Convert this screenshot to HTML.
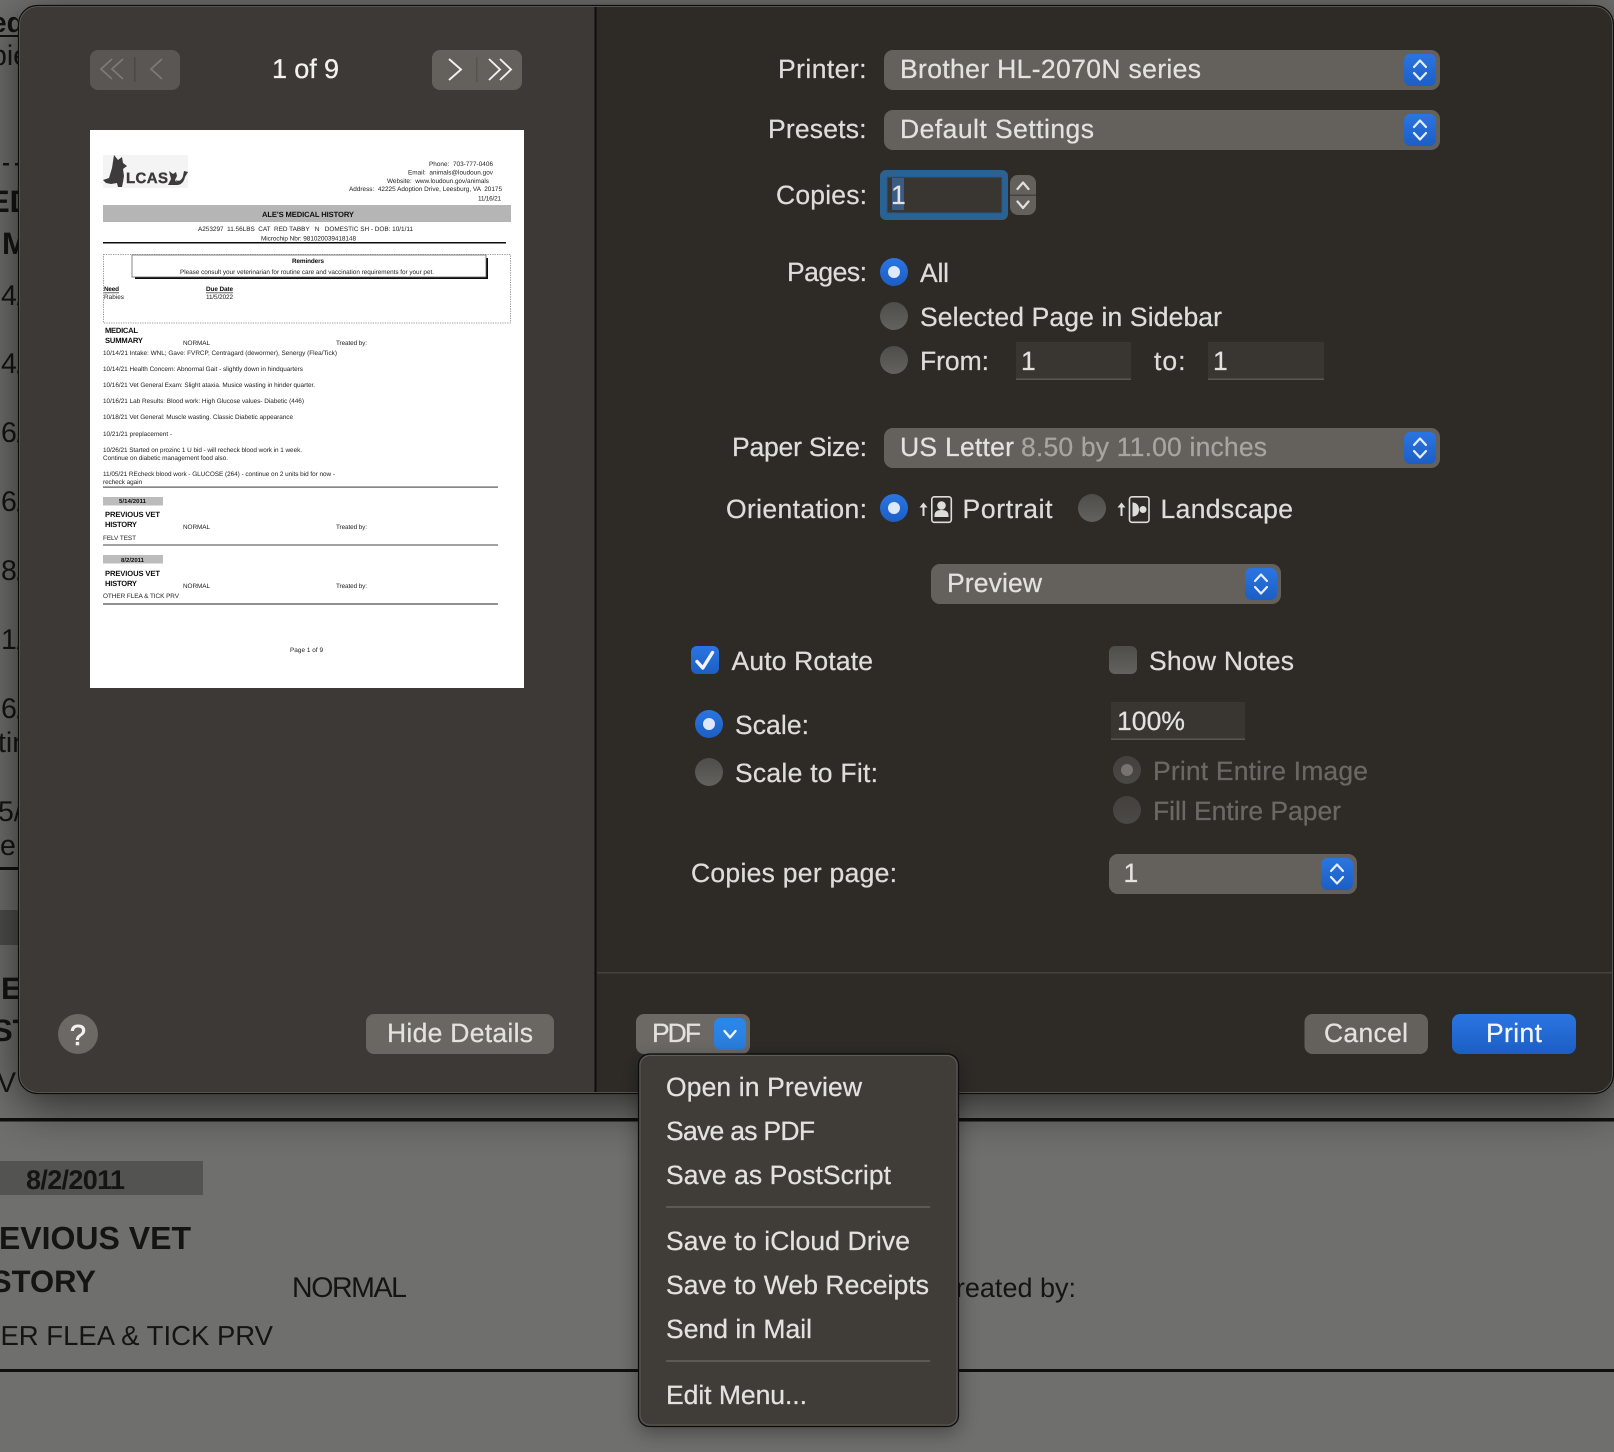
<!DOCTYPE html>
<html lang="en">
<head>
<meta charset="utf-8">
<title>Print dialog</title>
<style>
html,body{margin:0;padding:0;background:#6e6e6c;width:1614px;height:1452px;overflow:hidden}
svg{display:block}
text{font-family:"Liberation Sans",sans-serif;text-rendering:geometricPrecision}
.t{font-size:26.5px;fill:#dfddda;stroke:#dfddda;stroke-width:.25px}
.m{font-size:26.5px;fill:#e4e2df;stroke:#e4e2df;stroke-width:.25px}
.d{font-size:26.5px;fill:#6b6864;stroke:#6b6864;stroke-width:.25px}
.g{font-size:26.5px;fill:#a8a5a1;stroke:#a8a5a1;stroke-width:.25px}
.b{fill:#141414;font-size:28.500px}
.bb{fill:#141414;font-size:31px;font-weight:bold}
.p{font-size:6.4px;fill:#222;white-space:pre}
.pb{font-size:6.8px;fill:#111;font-weight:bold}
.ph{font-size:7.6px;fill:#111;font-weight:bold}
</style>
</head>
<body>
<svg xmlns="http://www.w3.org/2000/svg" width="1614" height="1452" viewBox="0 0 1614 1452">
<defs>
<filter id="sh" x="-10%" y="-10%" width="120%" height="125%"><feDropShadow dx="0" dy="12" stdDeviation="24" flood-color="#000" flood-opacity=".62"/></filter>
<filter id="msh" x="-20%" y="-20%" width="140%" height="140%"><feDropShadow dx="0" dy="6" stdDeviation="10" flood-color="#000" flood-opacity=".35"/></filter>
<filter id="soft" x="-2%" y="-2%" width="104%" height="104%"><feGaussianBlur stdDeviation=".38"/></filter>
<linearGradient id="blue" x1="0" y1="0" x2="0" y2="1"><stop offset="0" stop-color="#2b75e2"/><stop offset="1" stop-color="#1c5ec4"/></linearGradient>
<linearGradient id="blue2" x1="0" y1="0" x2="0" y2="1"><stop offset="0" stop-color="#2a88ec"/><stop offset="1" stop-color="#2b7cda"/></linearGradient>
<linearGradient id="off" x1="0" y1="0" x2="0" y2="1"><stop offset="0" stop-color="#4f4d4a"/><stop offset="1" stop-color="#64625e"/></linearGradient>
<linearGradient id="dis" x1="0" y1="0" x2="0" y2="1"><stop offset="0" stop-color="#43403d"/><stop offset="1" stop-color="#4b4946"/></linearGradient>
<clipPath id="dlg"><rect x="18.5" y="5.5" width="1595" height="1088" rx="19"/></clipPath>
<clipPath id="strip"><rect x="0" y="0" width="18" height="1100"/></clipPath>
<g id="ud">
<rect width="32" height="32" rx="6.5" fill="url(#blue)"/>
<path d="M10 13L16 6.500L22 13M10 19L16 25.500L22 19" fill="none" stroke="#e6eefb" stroke-width="2.200" stroke-linecap="round" stroke-linejoin="round"/>
</g>
</defs>

<rect width="1614" height="1452" fill="#6f6f6d"/>

<!-- background document (left strip) -->
<g clip-path="url(#strip)">
<text x="-9" y="32" font-size="28" font-weight="bold" fill="#111">ed</text>
<rect x="0" y="35" width="18" height="2" fill="#111"/>
<text x="-9" y="65" class="b">pie</text>
<rect x="3" y="163" width="6" height="2.500" fill="#141414"/>
<rect x="15" y="163" width="3" height="2.500" fill="#141414"/>
<text x="-11" y="212" class="bb">ED</text>
<text x="2" y="254" class="bb">M</text>
<text x="1" y="305" class="b">4/</text>
<text x="1" y="373" class="b">4/</text>
<text x="1" y="442" class="b">6/</text>
<text x="1" y="511" class="b">6/</text>
<text x="1" y="580" class="b">8/</text>
<text x="1" y="649" class="b">1/</text>
<text x="1" y="718" class="b">6/</text>
<text x="-2" y="752" class="b">tin</text>
<text x="-2" y="821" class="b">5/</text>
<text x="0" y="855" class="b">e</text>
<rect x="0" y="867" width="18" height="3" fill="#111"/>
<rect x="0" y="910" width="18" height="35" fill="#4e4e4c"/>
<text x="1" y="999" class="bb">E</text>
<text x="-8" y="1041" class="bb">ST</text>
<text x="-3" y="1092" class="b">V</text>
</g>

<!-- background document (below dialog) -->
<rect x="0" y="1118" width="1614" height="3.500" fill="#0f0f0f"/>
<rect x="0" y="1369" width="1614" height="3" fill="#0f0f0f"/>
<rect x="0" y="1161" width="203" height="34" fill="#535351"/>
<text x="26" y="1189" font-size="27" font-weight="bold" fill="#141414" textLength="99">8/2/2011</text>
<text x="191" y="1249" class="bb" style="font-size:32px" text-anchor="end">PREVIOUS VET</text>
<text x="96" y="1292" class="bb" text-anchor="end">HISTORY</text>
<text x="292" y="1297" class="b" textLength="115">NORMAL</text>
<text x="273" y="1345" class="b" style="font-size:27.5px" text-anchor="end">OTHER FLEA &amp; TICK PRV</text>
<text x="1076" y="1297" class="b" style="font-size:27px" text-anchor="end">Treated by:</text>

<!-- dialog -->
<rect x="18.500" y="5.500" width="1595" height="1088" rx="19" fill="#2e2b27" filter="url(#sh)"/>
<g clip-path="url(#dlg)">
<rect x="18" y="5" width="577" height="1090" fill="#3c3936"/>
<rect x="596" y="5" width="1020" height="1090" fill="#2e2b27"/>
<rect x="594.500" y="5" width="2" height="1090" fill="#0d0d0b"/>
<rect x="597" y="972" width="1020" height="1.500" fill="#45423e"/>
</g>
<rect x="19.500" y="6.500" width="1593" height="1086" rx="18" fill="none" stroke="#5f5c59" stroke-width="1"/>
<rect x="18.500" y="5.500" width="1595" height="1088" rx="19" fill="none" stroke="#0e0e0d" stroke-width="1.200"/>

<!-- nav -->
<rect x="90" y="50" width="90" height="40" rx="8" fill="#595653"/>
<path d="M112 59L101 69L112 79M123 59L112 69L123 79M162 59L151 69L162 79" fill="none" stroke="#7d7a76" stroke-width="1.800"/>
<rect x="134" y="57" width="1.500" height="25" fill="#4a4744"/>
<rect x="432" y="50" width="90" height="40" rx="8" fill="#64615d"/>
<path d="M449 59L461 69.500L449 80M489 59L500 69.500L489 80M500 59L511 69.500L500 80" fill="none" stroke="#f2f1ef" stroke-width="1.900"/>
<rect x="476" y="57" width="1.500" height="25" fill="#55524f"/>
<text x="272" y="78" font-size="27" fill="#f3f2f0" stroke="#f3f2f0" stroke-width=".3" textLength="67">1 of 9</text>

<!-- preview page -->
<rect x="90" y="130" width="434" height="558" fill="#fff"/>
<g filter="url(#soft)">
<rect x="103" y="155" width="85" height="33" fill="#f4f4f4"/>
<path d="M114 155L118 160L122 157L123 163L127 166L123 169L124 176L123 182L122 187L118 187L117 183L111 184L106 183L103 180L109 178L112 168Z" fill="#3c3a3a"/>
<path d="M169 171L173 174L176 172L177 176L175 180L178 185L168 185L171 179ZM176 180C179 182 182 180 183 176L184 171L188 172L185 177C184 182 181 185 177 185Z" fill="#3c3a3a"/>
<text x="126" y="183" font-size="15" font-weight="bold" fill="#3c3a3a" stroke="#3c3a3a" stroke-width=".4" textLength="42">LCAS</text>
<rect x="103" y="205" width="408" height="17" fill="#b5b5b5"/>
<rect x="103" y="242" width="403" height="1.500" fill="#111"/>
<rect x="103.500" y="254.500" width="407" height="68.500" fill="none" stroke="#777" stroke-width=".8" stroke-dasharray="1.200 1.200"/>
<rect x="135" y="258" width="353" height="21" fill="#111"/>
<rect x="132" y="255" width="354" height="22" fill="#fff" stroke="#666" stroke-width=".8"/>
<rect x="103" y="486.500" width="395" height="1.200" fill="#555"/>
<rect x="103" y="497" width="60" height="8.500" fill="#bcbcbc"/>
<rect x="103" y="544.500" width="395" height="1" fill="#444"/>
<rect x="103" y="555" width="60" height="8.500" fill="#bcbcbc"/>
<rect x="103" y="603.500" width="395" height="1" fill="#222"/>
<rect x="104" y="292.500" width="15" height=".7" fill="#222"/>
<rect x="206" y="292.500" width="27" height=".7" fill="#222"/>
<text class="p" x="429" y="166" textLength="64">Phone:  703-777-0406</text>
<text class="p" x="408" y="174.500" textLength="85">Email:  animals@loudoun.gov</text>
<text class="p" x="387" y="183" textLength="102">Website:  www.loudoun.gov/animals</text>
<text class="p" x="349" y="191" textLength="153">Address:  42225 Adoption Drive, Leesburg, VA  20175</text>
<text class="p" x="478" y="200.500" textLength="23">11/16/21</text>
<text class="ph" x="262" y="217" textLength="92">ALE'S MEDICAL HISTORY</text>
<text class="p" x="198" y="231" textLength="215">A253297  11.56LBS  CAT  RED TABBY   N   DOMESTIC SH - DOB: 10/1/11</text>
<text class="p" x="261" y="240.500" textLength="95">Microchip Nbr: 981020039418148</text>
<text class="pb" x="292" y="263" textLength="32" style="font-size:6.4px">Reminders</text>
<text class="p" x="180" y="274" textLength="254">Please consult your veterinarian for routine care and vaccination requirements for your pet.</text>
<text class="pb" x="104" y="291" textLength="15" style="font-size:6.4px">Need</text>
<text class="pb" x="206" y="291" textLength="27" style="font-size:6.4px">Due Date</text>
<text class="p" x="104" y="299" textLength="20">Rabies</text>
<text class="p" x="206" y="299" textLength="27">11/5/2022</text>
<text class="ph" x="105" y="333" textLength="33">MEDICAL</text>
<text class="ph" x="105" y="343" textLength="38">SUMMARY</text>
<text class="p" x="183" y="345" textLength="27">NORMAL</text>
<text class="p" x="336" y="345" textLength="31">Treated by:</text>
<text class="p" x="103" y="355" textLength="234">10/14/21 Intake: WNL; Gave: FVRCP, Centragard (dewormer), Senergy (Flea/Tick)</text>
<text class="p" x="103" y="371" textLength="200">10/14/21 Health Concern: Abnormal Gait - slightly down in hindquarters</text>
<text class="p" x="103" y="387" textLength="212">10/16/21 Vet General Exam: Slight ataxia. Musice wasting in hinder quarter.</text>
<text class="p" x="103" y="403" textLength="201">10/16/21 Lab Results: Blood work: High Glucose values- Diabetic (446)</text>
<text class="p" x="103" y="419" textLength="190">10/18/21 Vet General: Muscle wasting. Classic Diabetic appearance</text>
<text class="p" x="103" y="436" textLength="69">10/21/21 preplacement -</text>
<text class="p" x="103" y="452" textLength="199">10/26/21 Started on prozinc 1 U bid - will recheck blood work in 1 week.</text>
<text class="p" x="103" y="460" textLength="125">Continue on diabetic management food also.</text>
<text class="p" x="103" y="476" textLength="232">11/05/21 REcheck blood work - GLUCOSE (264) - continue on 2 units bid for now -</text>
<text class="p" x="103" y="484" textLength="39">recheck again</text>
<text class="pb" x="119" y="503" textLength="27" style="font-size:6px">5/14/2011</text>
<text class="ph" x="105" y="517" textLength="55">PREVIOUS VET</text>
<text class="ph" x="105" y="527" textLength="32">HISTORY</text>
<text class="p" x="183" y="529" textLength="27">NORMAL</text>
<text class="p" x="336" y="529" textLength="31">Treated by:</text>
<text class="p" x="103" y="540" textLength="33">FELV TEST</text>
<text class="pb" x="121" y="562" textLength="23" style="font-size:6px">8/2/2011</text>
<text class="ph" x="105" y="576" textLength="55">PREVIOUS VET</text>
<text class="ph" x="105" y="586" textLength="32">HISTORY</text>
<text class="p" x="183" y="588" textLength="27">NORMAL</text>
<text class="p" x="336" y="588" textLength="31">Treated by:</text>
<text class="p" x="103" y="598" textLength="76">OTHER FLEA &amp; TICK PRV</text>
<text class="p" x="290" y="652" textLength="33">Page 1 of 9</text>
</g>

<!-- printer rows -->
<text class="t" x="778" y="78" textLength="88.500">Printer:</text>
<rect x="884" y="50" width="556" height="40" rx="9" fill="#64615d"/>
<text class="m" x="900" y="78" textLength="301">Brother HL-2070N series</text>
<use href="#ud" x="1404" y="54"/>

<text class="t" x="768" y="138" textLength="98.500">Presets:</text>
<rect x="884" y="110" width="556" height="40" rx="9" fill="#64615d"/>
<text class="m" x="900" y="138" textLength="194">Default Settings</text>
<use href="#ud" x="1404" y="114"/>

<text class="t" x="776" y="204" textLength="91">Copies:</text>
<rect x="880" y="170" width="128" height="50" rx="6" fill="#2a6294"/>
<rect x="887" y="177" width="115" height="36" fill="#393632" stroke="#24598a" stroke-width="1"/>
<rect x="892" y="178" width="12" height="32" fill="#395b85"/>
<text class="m" x="891" y="204">1</text>
<rect x="1010" y="175" width="26" height="40" rx="8" fill="#64615d"/>
<rect x="1010" y="194.500" width="26" height="1.500" fill="#45423f"/>
<path d="M1017.500 189L1023 182.500L1028.500 189M1017.500 201.500L1023 208L1028.500 201.500" fill="none" stroke="#e2e0dd" stroke-width="2.200" stroke-linecap="round" stroke-linejoin="round"/>

<text class="t" x="787" y="281" textLength="80">Pages:</text>
<circle cx="894" cy="272" r="14" fill="url(#blue)"/><circle cx="894" cy="272" r="6" fill="#dde9fb"/>
<text class="t" x="920" y="282" textLength="29">All</text>
<circle cx="894" cy="316" r="14" fill="url(#off)"/>
<text class="t" x="920" y="326" textLength="302">Selected Page in Sidebar</text>
<circle cx="894" cy="360" r="14" fill="url(#off)"/>
<text class="t" x="920" y="370" textLength="69">From:</text>
<rect x="1016" y="342" width="115" height="37" fill="#393632"/>
<rect x="1016" y="378.500" width="115" height="1.500" fill="#5a5753"/>
<text class="m" x="1021" y="370">1</text>
<text class="t" x="1154" y="370" textLength="31.500">to:</text>
<rect x="1208" y="342" width="116" height="37" fill="#393632"/>
<rect x="1208" y="378.500" width="116" height="1.500" fill="#5a5753"/>
<text class="m" x="1213" y="370">1</text>

<text class="t" x="732" y="456" textLength="135">Paper Size:</text>
<rect x="884" y="428" width="556" height="40" rx="9" fill="#64615d"/>
<text class="m" x="900" y="456" textLength="114">US Letter</text>
<text class="g" x="1021" y="456" textLength="246">8.50 by 11.00 inches</text>
<use href="#ud" x="1404" y="432"/>

<text class="t" x="726" y="518" textLength="141">Orientation:</text>
<circle cx="894" cy="508" r="14" fill="url(#blue)"/><circle cx="894" cy="508" r="6" fill="#dde9fb"/>
<path d="M923.500 516V505" stroke="#dfddda" stroke-width="2"/><path d="M919.500 507.500L923.500 502.500L927.500 507.500Z" fill="#dfddda"/>
<rect x="931.800" y="496.800" width="19.500" height="25.500" rx="2.500" fill="none" stroke="#dfddda" stroke-width="1.600"/>
<circle cx="941.500" cy="505.500" r="4.300" fill="#dfddda"/>
<path d="M934.500 517v-1.500q0-5.500 7-5.500t7 5.500v1.500z" fill="#dfddda"/>
<text class="t" x="962.500" y="518" textLength="90">Portrait</text>
<circle cx="1092" cy="508" r="14" fill="url(#off)"/>
<path d="M1121.500 516V505" stroke="#dfddda" stroke-width="2"/><path d="M1117.500 507.500L1121.500 502.500L1125.500 507.500Z" fill="#dfddda"/>
<rect x="1129.500" y="496.800" width="19.500" height="25.500" rx="2.500" fill="none" stroke="#dfddda" stroke-width="1.600"/>
<path d="M1132.500 502.500h1q5.500 1 5.500 7t-5.500 7h-1z" fill="#dfddda"/>
<circle cx="1143" cy="509.500" r="3.500" fill="#dfddda"/>
<text class="t" x="1160.500" y="518" textLength="132.500">Landscape</text>

<rect x="931" y="564" width="350" height="40" rx="9" fill="#64615d"/>
<text class="m" x="947" y="592" textLength="95">Preview</text>
<use href="#ud" x="1245" y="568"/>

<rect x="691" y="646" width="28" height="28" rx="6" fill="url(#blue)"/>
<path d="M697 661.500L702.800 668L712.500 652.500" fill="none" stroke="#f1f5fd" stroke-width="3.400" stroke-linecap="round" stroke-linejoin="round"/>
<text class="t" x="731.500" y="670" textLength="141.500">Auto Rotate</text>
<rect x="1109" y="646" width="28" height="28" rx="6" fill="url(#off)"/>
<text class="t" x="1149" y="670" textLength="145">Show Notes</text>

<circle cx="709" cy="724" r="14" fill="url(#blue)"/><circle cx="709" cy="724" r="6" fill="#dde9fb"/>
<text class="t" x="735" y="734" textLength="74">Scale:</text>
<circle cx="709" cy="772" r="14" fill="url(#off)"/>
<text class="t" x="735" y="782" textLength="143">Scale to Fit:</text>

<rect x="1111" y="702" width="134" height="37" fill="#393632"/>
<rect x="1111" y="738.500" width="134" height="1.500" fill="#5a5753"/>
<text class="m" x="1117" y="730" textLength="68">100%</text>

<circle cx="1127" cy="770" r="14" fill="url(#dis)"/><circle cx="1127" cy="770" r="6" fill="#77746f"/>
<text class="d" x="1153" y="780" textLength="215">Print Entire Image</text>
<circle cx="1127" cy="810" r="14" fill="url(#dis)"/>
<text class="d" x="1153" y="820" textLength="188">Fill Entire Paper</text>

<text class="t" x="691" y="882" textLength="206">Copies per page:</text>
<rect x="1109" y="854" width="248" height="40" rx="9" fill="#64615d"/>
<text class="m" x="1123.500" y="882">1</text>
<use href="#ud" x="1321" y="858"/>

<!-- bottom buttons -->
<circle cx="78" cy="1034" r="20" fill="#6c6965"/>
<text x="78" y="1045" font-size="29" fill="#f3f2f0" stroke="#f3f2f0" stroke-width=".6" text-anchor="middle">?</text>
<rect x="366" y="1014" width="188" height="40" rx="8" fill="#6a6763"/>
<text class="m" x="387" y="1042" textLength="146">Hide Details</text>
<rect x="636" y="1014" width="114" height="40" rx="8" fill="#6c6965"/>
<text class="m" x="652" y="1042" textLength="49">PDF</text>
<rect x="714" y="1018" width="32" height="32" rx="6.500" fill="url(#blue2)"/>
<path d="M724.500 1031L730 1037.500L735.500 1031" fill="none" stroke="#f1f5fd" stroke-width="2.400" stroke-linecap="round" stroke-linejoin="round"/>
<rect x="1304.500" y="1014" width="123.500" height="40" rx="8" fill="#64615d"/>
<text class="m" x="1324" y="1042" textLength="84">Cancel</text>
<rect x="1452" y="1014" width="124" height="40" rx="8" fill="url(#blue)"/>
<text x="1486" y="1042" font-size="26.500" fill="#f3f6fc" stroke="#f3f6fc" stroke-width=".25" textLength="56">Print</text>

<!-- menu -->
<rect x="638.500" y="1054" width="320" height="372.500" rx="11" fill="#403d39" stroke="#0e0e0d" stroke-width="1.200" filter="url(#msh)"/>
<rect x="640" y="1055.500" width="317" height="369.500" rx="10" fill="none" stroke="#5e5b58" stroke-width="1"/>
<text class="m" x="666" y="1096" textLength="196">Open in Preview</text>
<text class="m" x="666" y="1140" textLength="149">Save as PDF</text>
<text class="m" x="666" y="1184" textLength="225">Save as PostScript</text>
<rect x="666" y="1206" width="264" height="2" fill="#5d5a56"/>
<text class="m" x="666" y="1250" textLength="244">Save to iCloud Drive</text>
<text class="m" x="666" y="1294" textLength="263">Save to Web Receipts</text>
<text class="m" x="666" y="1338" textLength="146">Send in Mail</text>
<rect x="666" y="1360" width="264" height="2" fill="#5d5a56"/>
<text class="m" x="666" y="1404" textLength="141">Edit Menu...</text>
</svg>
</body>
</html>
